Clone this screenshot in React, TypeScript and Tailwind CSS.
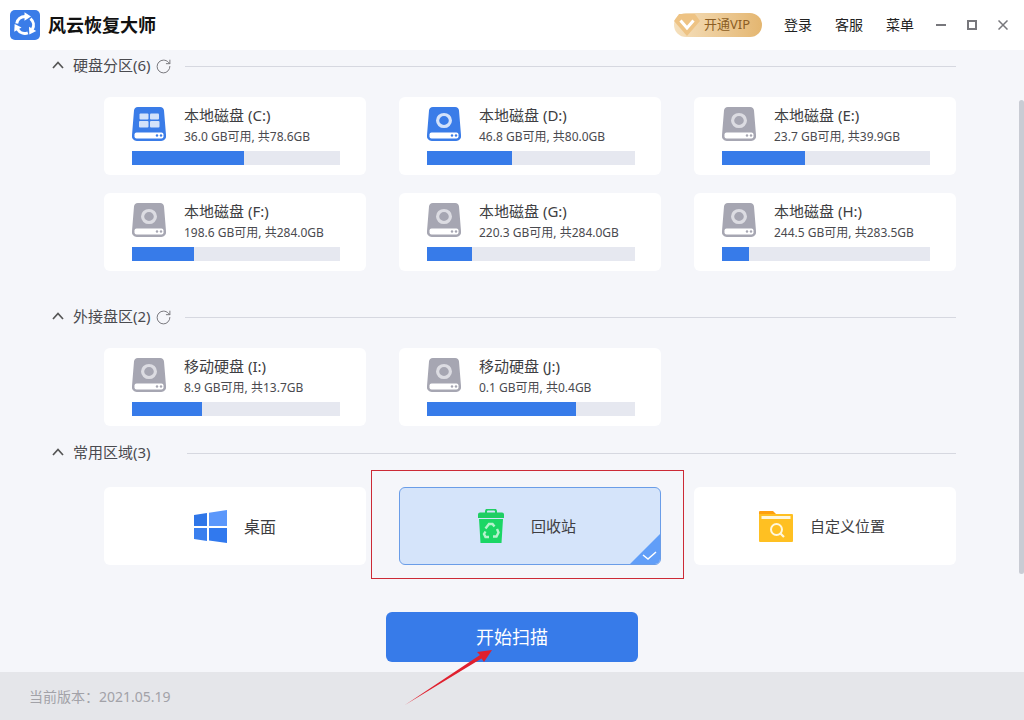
import { RotateCw } from 'lucide-react'

type Disk = { name: string; info: string; used: number; kind: 'system' | 'active' | 'idle' }

const localDisks: Disk[] = [
  { name: '本地磁盘 (C:)', info: '36.0 GB可用, 共78.6GB', used: 112, kind: 'system' },
  { name: '本地磁盘 (D:)', info: '46.8 GB可用, 共80.0GB', used: 85, kind: 'active' },
  { name: '本地磁盘 (E:)', info: '23.7 GB可用, 共39.9GB', used: 83, kind: 'idle' },
  { name: '本地磁盘 (F:)', info: '198.6 GB可用, 共284.0GB', used: 62, kind: 'idle' },
  { name: '本地磁盘 (G:)', info: '220.3 GB可用, 共284.0GB', used: 45, kind: 'idle' },
  { name: '本地磁盘 (H:)', info: '244.5 GB可用, 共283.5GB', used: 27, kind: 'idle' },
]

const externalDisks: Disk[] = [
  { name: '移动硬盘 (I:)', info: '8.9 GB可用, 共13.7GB', used: 70, kind: 'idle' },
  { name: '移动硬盘 (J:)', info: '0.1 GB可用, 共0.4GB', used: 149, kind: 'idle' },
]

function DiskIcon({ kind }: { kind: Disk['kind'] }) {
  const body = kind === 'idle' ? '#a6a6b2' : '#3a7ce8'
  const ring = kind === 'idle' ? '#dcdce2' : '#d3e2fa'
  return (
    <svg width="34" height="34" viewBox="0 0 34 34" className="shrink-0">
      <path d="M6 0h22a4 4 0 0 1 4 3.5L34 28a5 5 0 0 1-5 6H5a5 5 0 0 1-5-6L2 3.5A4 4 0 0 1 6 0z" fill={body} />
      {kind === 'system' ? (
        <g fill={ring}>
          <rect x="7.5" y="6.5" width="9" height="6" rx="1" />
          <rect x="18" y="6.5" width="9" height="6" rx="1" />
          <rect x="7" y="14" width="9.5" height="6.5" rx="1" />
          <rect x="18" y="14" width="9.5" height="6.5" rx="1" />
        </g>
      ) : (
        <ellipse cx="17" cy="13.5" rx="6.4" ry="6" fill="none" stroke={ring} strokeWidth="3.2" />
      )}
      <rect x="2.5" y="25.5" width="29" height="6" rx="2" fill="#fff" />
      <circle cx="25" cy="28.5" r="1.2" fill={body} />
      <circle cx="29" cy="28.5" r="1.2" fill={body} />
    </svg>
  )
}

function SectionHeader({ title, refresh, lineClass }: { title: string; refresh?: boolean; lineClass: string }) {
  return (
    <div className="flex h-5 items-center">
      <svg width="12" height="8" viewBox="0 0 12 8" className="-mt-[2px] shrink-0">
        <path d="M1 7l5-5.5L11 7" fill="none" stroke="#555" strokeWidth="1.7" />
      </svg>
      <span className="-mt-[2px] ml-[9px] text-[15px] leading-5 text-[#4a4a4f]">{title}</span>
      {refresh && <RotateCw size={17} strokeWidth={1.4} className="ml-[4px] shrink-0 text-[#77777c]" />}
      <div className={`h-px flex-1 bg-[#d6d8e0] ${lineClass}`} />
    </div>
  )
}

function DiskCard({ disk }: { disk: Disk }) {
  return (
    <div className="h-[78px] w-[262px] rounded-md bg-white pl-7 pt-[10px]">
      <div className="flex h-[34px]">
        <DiskIcon kind={disk.kind} />
        <div className="ml-[18px] -mt-[2px]">
          <div className="text-[15px] leading-[20px] text-[#3e3e42]">{disk.name}</div>
          <div className="mt-[2px] text-xs leading-[20px] text-[#4a4a4f]">{disk.info}</div>
        </div>
      </div>
      <div className="mt-[10px] h-[14px] w-[208px] bg-[#e6e8f0]">
        <div className="h-full bg-[#377be9]" style={{ width: disk.used }} />
      </div>
    </div>
  )
}

function LogoArrow({ angle }: { angle: number }) {
  return (
    <g transform={`rotate(${angle} 15 15)`}>
      <path d="M6.700 13.500A8.500 8.500 0 0 1 15 6.500" fill="none" stroke="#fff" strokeWidth="3" />
      <path d="M14.500 2.300L21 6.500l-6.500 4.200z" fill="#fff" />
    </g>
  )
}

function Logo() {
  return (
    <svg width="30" height="30" viewBox="0 0 30 30" className="shrink-0">
      <rect width="30" height="30" rx="5" fill="#3a7ce8" />
      <LogoArrow angle={0} />
      <LogoArrow angle={120} />
      <LogoArrow angle={240} />
    </svg>
  )
}

function WindowsIcon() {
  return (
    <svg width="33" height="33" viewBox="0 0 33 33" className="shrink-0">
      <path d="M0 5l13-2v13H0z" fill="#2f76e8" />
      <path d="M15 2.700L33 0v16H15z" fill="#5b97fb" />
      <path d="M0 18h13v13L0 29z" fill="#3a7fee" />
      <path d="M15 18h18v15l-18-2.500z" fill="#3179ee" />
    </svg>
  )
}

function RecycleIcon() {
  return (
    <svg width="26" height="34" viewBox="0 0 26 34" className="shrink-0">
      <path d="M8 4V2.500A2 2 0 0 1 10 .5h6a2 2 0 0 1 2 2V4" fill="none" stroke="#1fce63" strokeWidth="2" />
      <path d="M2 3.500h22A2 2 0 0 1 26 5.500V9H0V5.500a2 2 0 0 1 2-2z" fill="#1fce63" />
      <path d="M1 10h24l-1.500 24H2.500z" fill="#1bd665" />
      <g fill="none" stroke="#b6f2cd" strokeWidth="2.400">
        <path d="M7.500 19.500l3.500-4.500h3.500l2 2.500" />
        <path d="M19 20l1.500 3.500-2 4h-3.500" />
        <path d="M11 28H7.500l-1.500-3 1.500-2.500" />
      </g>
    </svg>
  )
}

function FolderIcon() {
  return (
    <svg width="34" height="31" viewBox="0 0 34 31" className="shrink-0">
      <path d="M0 3h33a1 1 0 0 1 1 1v26a1 1 0 0 1-1 1H1a1 1 0 0 1-1-1z" fill="#ffc022" />
      <path d="M1 0h13l3 3H0V1a1 1 0 0 1 1-1z" fill="#ff9f0f" />
      <rect x="2.500" y="5" width="29" height="3" fill="#fff7dc" />
      <circle cx="17.500" cy="18.500" r="5.500" fill="none" stroke="#fff7dc" strokeWidth="2" />
      <path d="M21.500 22.500l3.500 3.500" stroke="#fff7dc" strokeWidth="2.200" />
    </svg>
  )
}

export default function App() {
  return (
    <div className="relative flex h-[720px] w-[1024px] flex-col overflow-hidden bg-[#f5f6fa] [font-family:'Noto_Sans','Noto_Sans_CJK_SC',sans-serif]">
      <header className="flex h-[50px] shrink-0 items-center bg-white pl-[10px]">
        <Logo />
        <span className="ml-2 text-lg font-bold leading-none text-[#111]">风云恢复大师</span>
        <div className="ml-auto flex h-6 w-[88px] items-center rounded-full bg-gradient-to-r from-[#f5e0bd] to-[#e4b670]">
          <svg width="26" height="22" viewBox="0 0 26 22" className="shrink-0">
            <path d="M5 0h16l5 7-13 15L0 7z" fill="#eec384" />
            <path d="M6.500 6.500l6.500 7.500 6.500-7.500" fill="none" stroke="#fff" strokeWidth="3" />
          </svg>
          <span className="ml-1 text-[13px] text-[#8c5e24]">开通VIP</span>
        </div>
        <nav className="ml-[22px] flex gap-[23px] text-sm leading-none text-[#222]">
          <span>登录</span>
          <span>客服</span>
          <span>菜单</span>
        </nav>
        <div className="ml-[22px] flex items-center gap-[21px] pr-4">
          <div className="h-[2px] w-[10px] bg-[#77777c]" />
          <div className="h-[10px] w-[10px] border-2 border-[#77777c]" />
          <svg width="10" height="10" viewBox="0 0 10 10">
            <path d="M0.500 0.500l9 9M9.500 0.500l-9 9" stroke="#77777c" strokeWidth="1.500" />
          </svg>
        </div>
      </header>

      <main className="flex flex-1 flex-col pl-[52px] pr-[68px] pt-[6px]">
        <SectionHeader title="硬盘分区(6)" refresh lineClass="ml-[13px]" />
        <div className="ml-[52px] mt-[21px] grid grid-cols-[262px_262px_262px] gap-x-[33px] gap-y-[18px]">
          {localDisks.map((disk) => (
            <DiskCard key={disk.name} disk={disk} />
          ))}
        </div>

        <div className="mt-9">
          <SectionHeader title="外接盘区(2)" refresh lineClass="ml-[13px]" />
        </div>
        <div className="ml-[52px] mt-[21px] grid grid-cols-[262px_262px_262px] gap-x-[33px]">
          {externalDisks.map((disk) => (
            <DiskCard key={disk.name} disk={disk} />
          ))}
        </div>

        <div className="mt-[17px]">
          <SectionHeader title="常用区域(3)" lineClass="ml-[36px]" />
        </div>
        <div className="ml-[52px] mt-6 grid grid-cols-[262px_262px_262px] gap-x-[33px]">
          <div className="flex h-[78px] items-center rounded-md bg-white pl-[90px] text-[#3e3e42]">
            <WindowsIcon />
            <span className="ml-[17px] mt-[2px] text-base">桌面</span>
          </div>
          <div className="relative flex h-[78px] items-center overflow-hidden rounded-md border border-[#6a9de8] bg-[#d5e4fa] pl-[78px] text-[15px] text-[#3e3e42]">
            <RecycleIcon />
            <span className="ml-[27px]">回收站</span>
            <svg width="30" height="30" viewBox="0 0 30 30" className="absolute bottom-0 right-0">
              <path d="M30 0v30H0z" fill="#619ef8" />
              <path d="M13 21l5 4 8-7" fill="none" stroke="#fff" strokeWidth="1.500" />
            </svg>
          </div>
          <div className="flex h-[78px] items-center rounded-md bg-white pl-[65px] text-[15px] text-[#3e3e42]">
            <FolderIcon />
            <span className="ml-[17px]">自定义位置</span>
          </div>
        </div>

        <button className="ml-[334px] mt-[47px] h-[50px] w-[252px] rounded-md bg-[#377be9] text-lg text-white">
          开始扫描
        </button>
      </main>

      <footer className="flex h-12 shrink-0 items-center bg-[#e5e6ea] pl-[29px] pt-[2px] text-sm text-[#a2a2a8]">
        当前版本：2021.05.19
      </footer>

      {/* scrollbar */}
      <div className="absolute right-0 top-[100px] h-[474px] w-[5px] rounded-sm bg-[#c9ccd4]" />

      {/* annotation marks on top of the screenshot */}
      <div className="absolute left-[371px] top-[470px] h-[109px] w-[313px] border border-[#cc2a36]" />
      <svg width="100" height="64" viewBox="0 0 100 64" className="absolute left-[400px] top-[646px]">
        <path d="M5 59L80 9l-3-3 15-2-8 12-2.500-3.500z" fill="#e0202e" />
      </svg>
    </div>
  )
}
